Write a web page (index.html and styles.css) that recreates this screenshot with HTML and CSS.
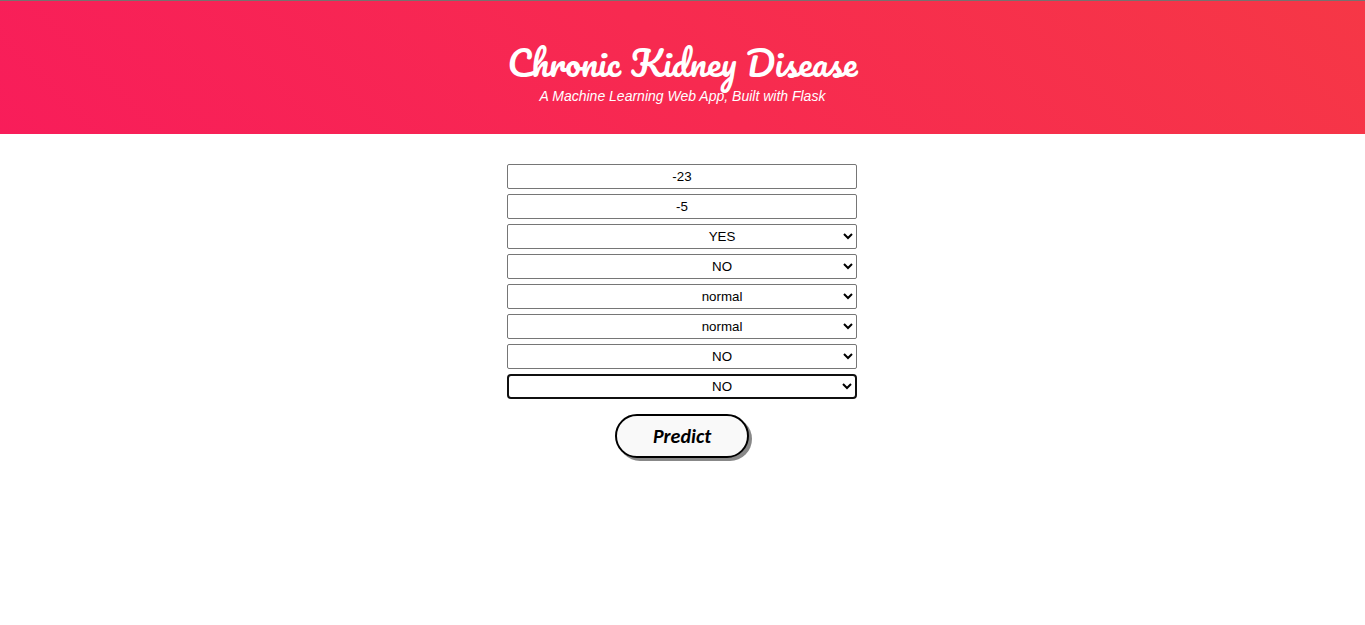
FILE: index.html
```html
<!DOCTYPE html>
<html lang="en">
<head>
<meta charset="utf-8">
<title>Chronic Kidney Disease</title>
<link rel="stylesheet" href="styles.css">
</head>
<body>
<header class="header">
  <h1 class="title">Chronic Kidney Disease</h1>
  <p class="subtitle">A Machine Learning Web App, Built with Flask</p>
</header>
<main class="main">
  <form class="form">
    <input class="field" type="text" value="-23">
    <input class="field" type="text" value="-5">
    <select class="field select"><option>YES</option><option>NO</option></select>
    <select class="field select"><option>NO</option><option>YES</option></select>
    <select class="field select"><option>normal</option><option>abnormal</option></select>
    <select class="field select"><option>normal</option><option>abnormal</option></select>
    <select class="field select"><option>NO</option><option>YES</option></select>
    <select class="field select active"><option>NO</option><option>YES</option></select>
    <button class="predict" type="button">Predict</button>
  </form>
</main>
</body>
</html>
```
FILE: styles.css
```css
* { box-sizing: border-box; }
body {
  margin: 0;
  background: #fff;
  font-family: "Liberation Sans", Arial, sans-serif;
}
.header {
  height: 134px;
  padding-top: 36px;
  border-top: 1px solid #78716f;
  background: linear-gradient(45deg, #f81d5a, #f63746);
  color: #fff;
  text-align: center;
}
.title {
  margin: 0;
  font: 400 35px/50px Pacifico, cursive;
  white-space: nowrap;
}
.subtitle {
  margin: 1px 0 0;
  font-size: 14px;
  font-style: italic;
  line-height: 16px;
}
.main {
  padding: 30px 0;
}
.form {
  display: flex;
  flex-direction: column;
  align-items: center;
  gap: 5px;
  width: 350px;
  margin: 0 auto;
  position: relative;
  left: -0.5px;
}
.field {
  width: 350px;
  height: 25px;
  margin: 0;
  padding: 1px 2px;
  border: 1px solid #767676;
  border-radius: 2px;
  background: #fff;
  color: #000;
  font: 13.333px "Liberation Sans", Arial, sans-serif;
  text-align: center;
}
.select {
  padding: 0 0 0 92px;
}
.active {
  border: 2px solid #101010;
  border-radius: 4px;
}
.predict {
  width: 134px;
  height: 44px;
  margin-top: 10px;
  padding: 0;
  border: 2px solid #000;
  border-radius: 22px;
  background: #f9f9f9;
  box-shadow: 3px 3px 0 #888;
  color: #000;
  font: italic bold 20px/40px Calibri, Carlito, sans-serif;
}
```
